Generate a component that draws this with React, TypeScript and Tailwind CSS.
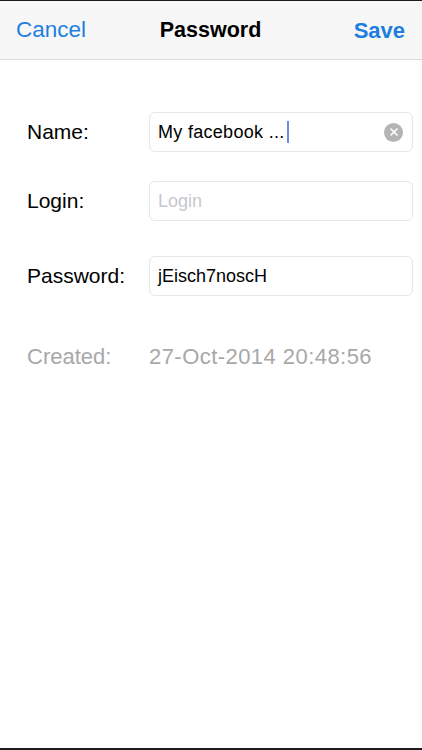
import { X } from 'lucide-react'

const FONT = { fontFamily: '"Liberation Sans", Arial, sans-serif' }

function Field({ children, clear }: { children: React.ReactNode; clear?: boolean }) {
  return (
    <div className="flex-1 h-[40px] rounded-[6px] border border-[#e6e6e6] bg-white flex items-center pl-[8px] pr-[9px]">
      <div className="flex-1 flex items-center text-[18px] text-black">{children}</div>
      {clear && (
        <span className="w-[19px] h-[19px] rounded-full bg-[#b4b4b4] flex items-center justify-center">
          <X size={12} strokeWidth={3.2} className="text-white" />
        </span>
      )}
    </div>
  )
}

export default function App() {
  return (
    <div className="w-[422px] h-[750px] bg-white flex flex-col border-t border-[#1c1c1c] border-b-2" style={FONT}>
      <div className="h-[59px] bg-[#f7f7f7] border-b border-[#dcdcdc] flex items-center px-[16px]">
        <span className="flex-1 text-[22.5px] text-[#1d7fe0]">Cancel</span>
        <span className="text-[21.5px] font-bold text-black">Password</span>
        <span className="flex-1 text-right text-[22px] font-bold text-[#1d7fe0] mr-[1px]">Save</span>
      </div>

      <div className="flex flex-col pl-[27px] pr-[9px]">
        <div className="flex items-center mt-[52px]">
          <span className="w-[122px] text-[21px] text-black">Name:</span>
          <Field clear>
            <span className="tracking-[0.3px]">My facebook ...</span>
            <span className="ml-[2px] w-[2px] h-[22px] bg-[#6a8fe0]" />
          </Field>
        </div>
        <div className="flex items-center mt-[29px]">
          <span className="w-[122px] text-[21px] text-black">Login:</span>
          <Field>
            <span className="text-[#c7c7cd]">Login</span>
          </Field>
        </div>
        <div className="flex items-center mt-[35px]">
          <span className="w-[122px] text-[21px] text-black">Password:</span>
          <Field>
            <span>jEisch7noscH</span>
          </Field>
        </div>
        <div className="flex items-center mt-[44px] text-[22px] text-[#a8a8a8]">
          <span className="w-[122px]">Created:</span>
          <span className="tracking-[0.45px]">27-Oct-2014 20:48:56</span>
        </div>
      </div>
    </div>
  )
}
